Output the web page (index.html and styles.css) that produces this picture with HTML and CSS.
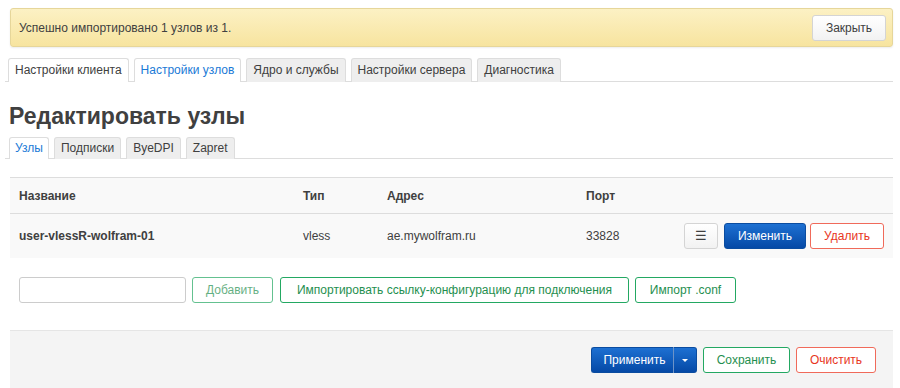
FILE: index.html
```html
<!DOCTYPE html>
<html lang="ru">
<head>
<meta charset="utf-8">
<link rel="stylesheet" href="styles.css">
</head>
<body>
<div class="page">
  <div class="alert">
    <span class="alert-text">Успешно импортировано 1 узлов из 1.</span>
    <button class="btn btn-default close">Закрыть</button>
  </div>

  <ul class="tabs top-tabs">
    <li class="tab tab-light">Настройки клиента</li>
    <li class="tab active">Настройки узлов</li>
    <li class="tab">Ядро и службы</li>
    <li class="tab">Настройки сервера</li>
    <li class="tab">Диагностика</li>
  </ul>

  <h2 class="title">Редактировать узлы</h2>

  <ul class="tabs sub-tabs">
    <li class="tab active">Узлы</li>
    <li class="tab">Подписки</li>
    <li class="tab">ByeDPI</li>
    <li class="tab">Zapret</li>
  </ul>

  <div class="table">
    <div class="row head">
      <div class="c-name">Название</div>
      <div class="c-type">Тип</div>
      <div class="c-addr">Адрес</div>
      <div class="c-port">Порт</div>
      <div class="c-act"></div>
    </div>
    <div class="row body-row">
      <div class="c-name strong">user-vlessR-wolfram-01</div>
      <div class="c-type">vless</div>
      <div class="c-addr">ae.mywolfram.ru</div>
      <div class="c-port">33828</div>
      <div class="c-act">
        <button class="btn btn-default btn-menu">☰</button>
        <button class="btn btn-primary btn-edit">Изменить</button>
        <button class="btn btn-negative btn-del">Удалить</button>
      </div>
    </div>
  </div>

  <div class="add-row">
    <input class="text-input" type="text">
    <button class="btn btn-positive btn-faded btn-add">Добавить</button>
    <button class="btn btn-positive btn-import">Импортировать ссылку-конфигурацию для подключения</button>
    <button class="btn btn-positive btn-conf">Импорт .conf</button>
  </div>

  <div class="footer">
    <div class="split">
      <button class="btn btn-primary split-main">Применить</button>
      <button class="btn btn-primary split-caret"><span class="caret"></span></button>
    </div>
    <button class="btn btn-positive btn-save">Сохранить</button>
    <button class="btn btn-negative btn-reset">Очистить</button>
  </div>
</div>
</body>
</html>
```
FILE: styles.css
```css
* { box-sizing: border-box; }
html, body { margin: 0; padding: 0; background: #fff; }
body {
  font-family: "Liberation Sans", Arial, Helvetica, sans-serif;
  font-size: 12px;
  color: #404040;
}
.page {
  padding: 8px 7px 0 10px;
}
.alert {
  display: flex;
  align-items: center;
  justify-content: space-between;
  height: 39px;
  padding: 0 6px 0 8px;
  background: linear-gradient(#fcf1c4, #f7e49f);
  border: 1px solid #e6d69a;
  border-radius: 3px;
  box-shadow: 0 1px 2px rgba(0,0,0,0.08);
  color: #404040;
  font-size: 12px;
}
.btn {
  font-family: "Liberation Sans", Arial, Helvetica, sans-serif;
  font-size: 12px;
  height: 26px;
  padding: 0 12px;
  border-radius: 3px;
  border: 1px solid #ccc;
  background: linear-gradient(#fff, #f2f2f2);
  color: #404040;
  line-height: 24px;
  cursor: pointer;
  white-space: nowrap;
}
.btn-default { border-color: #d4d4d4; }
.close { width: 74px; padding: 0; }
.tabs {
  list-style: none;
  margin: 0;
  padding: 0;
  display: flex;
  gap: 5px;
  border-bottom: 1px solid #ddd;
}
.top-tabs {
  margin: 11px 0 0 -5px;
  padding-left: 3px;
  height: 24px;
}
.tab {
  font-size: 12px;
  background: #eee;
  border: 1px solid #ddd;
  border-bottom: none;
  border-radius: 3px 3px 0 0;
  padding: 0 6px;
  line-height: 23px;
  height: 24px;
  color: #404040;
}
.tab.active, .tab.tab-light { background: #fff; }
.tab.active { color: #1a7ad6; }
.title {
  margin: 20px 0 0 -1px;
  font-size: 23px;
  line-height: 28px;
  font-weight: bold;
  color: #404040;
}
.sub-tabs {
  margin: 7px 0 0 -5px;
  padding-left: 4px;
  height: 22px;
}
.sub-tabs .tab { line-height: 21px; height: 22px; padding: 0 6px; }
.sub-tabs .tab.active { padding: 0 5px; }
.table {
  margin-top: 18px;
  border-top: 1px solid #ddd;
  background: #f9f9f9;
}
.row {
  display: flex;
  align-items: center;
}
.head { height: 36px; border-bottom: 1px solid #ddd; font-weight: bold; }
.body-row { height: 44px; }
.strong { font-weight: bold; }
.c-name { width: 293px; padding-left: 9px; }
.c-type { width: 84px; }
.c-addr { width: 199px; }
.c-port { width: 98px; }
.c-act { display: flex; }
.btn-menu { width: 34px; padding: 0; font-size: 13px; }
.btn-primary {
  background: linear-gradient(#1d70d2, #0549a6);
  border-color: #0a4ca0;
  color: #fff;
}
.btn-edit { width: 82px; padding: 0; margin-left: 6px; }
.btn-negative { border-color: #f06a5a; color: #e8361e; background: #fff; }
.btn-del { width: 74px; padding: 0; margin-left: 4px; }
.btn-positive { border-color: #23a862; color: #1f8f4f; background: #fff; }
.add-row {
  display: flex;
  align-items: center;
  gap: 6px;
  padding: 19px 0 0 9px;
}
.text-input {
  width: 167px;
  height: 26px;
  border: 1px solid #ccc;
  border-radius: 3px;
}
.btn-faded { opacity: 0.7; }
.btn-add { width: 81px; padding: 0; }
.btn-import { width: 349px; padding: 0; margin-left: 1px; }
.btn-conf { width: 101px; padding: 0; }
.footer {
  margin-top: 27px;
  height: 59px;
  background: #f4f4f4;
  border-top: 1px solid #e5e5e5;
  display: flex;
  align-items: center;
  justify-content: flex-end;
  gap: 6px;
  padding: 0 17px 0 0;
}
.split { display: flex; }
.split-main { width: 83px; padding: 0 0 0 4px; border-radius: 3px 0 0 3px; border-right: 1px solid #6d93c7; }
.split-caret { width: 23px; padding: 0; border-radius: 0 3px 3px 0; border-left: none; display: flex; align-items: center; justify-content: center; }
.caret { width: 0; height: 0; border-left: 3px solid transparent; border-right: 3px solid transparent; border-top: 3px solid #fff; }
.btn-save { width: 87px; padding: 0; }
.btn-reset { width: 80px; padding: 0; }
```
